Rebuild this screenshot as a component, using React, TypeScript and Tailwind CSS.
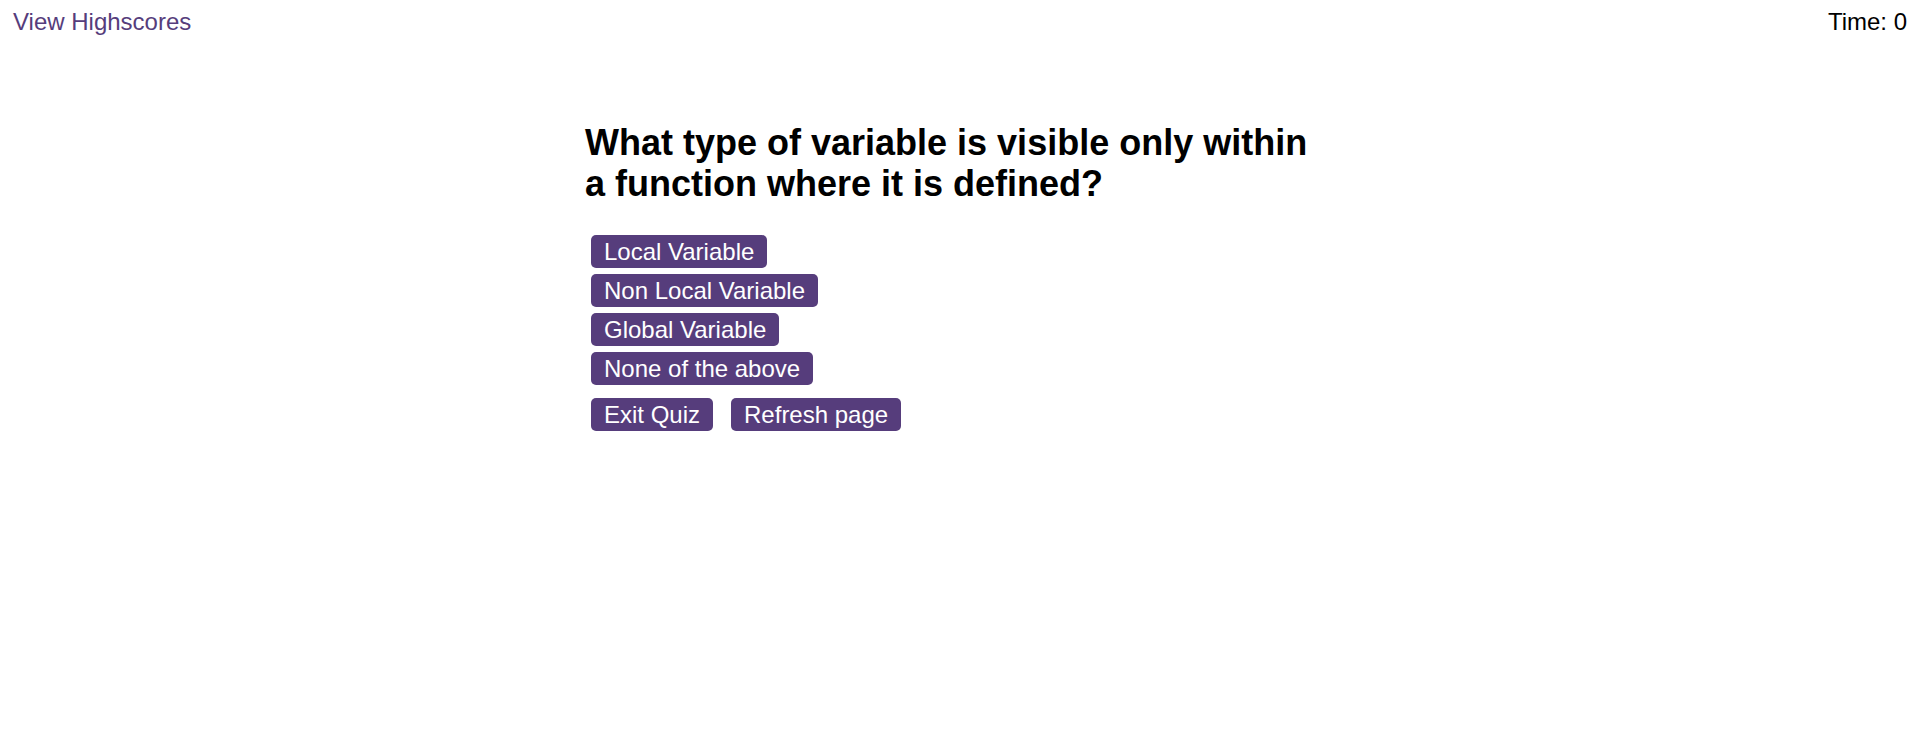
import React from "react";

const choices = [
  "Local Variable",
  "Non Local Variable",
  "Global Variable",
  "None of the above",
];

const btn =
  "bg-[#563d7c] text-white text-[24px] leading-[27px] px-[13px] py-[3px] rounded-[5px] cursor-pointer";

const App: React.FC = () => {
  return (
    <div
      className="min-h-[753px] bg-white text-black"
      style={{ fontFamily: '"Liberation Sans", Arial, sans-serif' }}
    >
      <header className="flex justify-between items-start px-[13px] pt-[8px] text-[24px] leading-[28px]">
        <a href="#" className="text-[#563d7c]">
          View Highscores
        </a>
        <div>Time: 0</div>
      </header>

      <main className="w-[750px] mx-auto mt-[86px]">
        <h1 className="text-[36px] leading-[41px] font-bold">
          What type of variable is visible only within a function where it is
          defined?
        </h1>

        <div className="flex flex-col items-start gap-[6px] mt-[31px] pl-[6px]">
          {choices.map((c) => (
            <button key={c} className={btn}>
              {c}
            </button>
          ))}
        </div>

        <div className="flex gap-[18px] mt-[13px] pl-[6px]">
          <button className={btn}>Exit Quiz</button>
          <button className={btn}>Refresh page</button>
        </div>
      </main>
    </div>
  );
};

export default App;
